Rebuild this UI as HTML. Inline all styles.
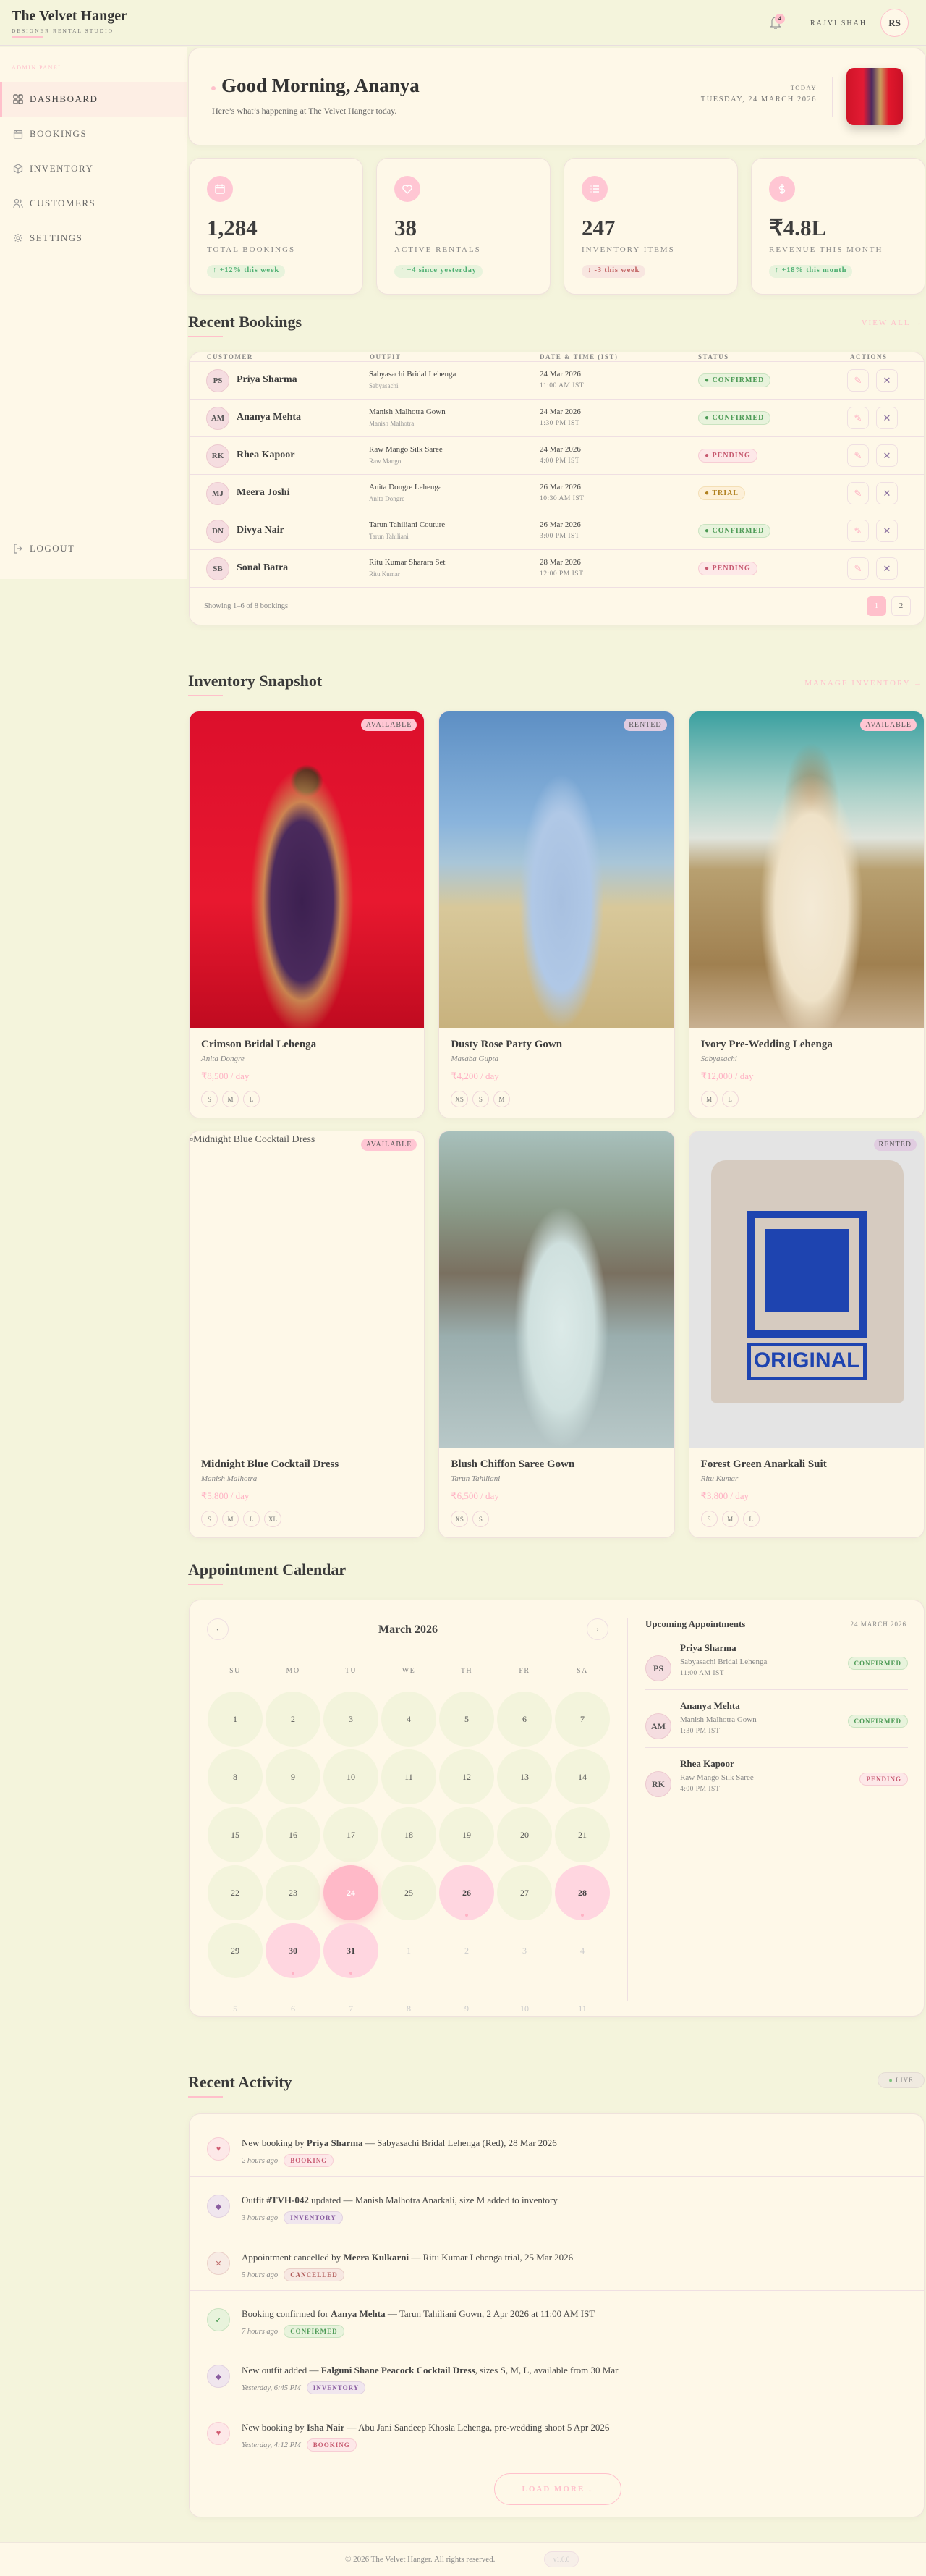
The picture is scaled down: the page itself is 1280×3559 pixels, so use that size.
<!DOCTYPE html>
<html><head><meta charset="utf-8">
<style>
*{box-sizing:border-box;margin:0;padding:0}
body{width:1280px;height:3559px;background:#f4f4dc;font-family:"Liberation Serif",serif;color:#3d3d3d;position:relative;overflow:hidden}
.abs{position:absolute}
.card{background:#fef8e8;border:1px solid #efe2dc;border-radius:16px;box-shadow:0 2px 8px rgba(200,180,170,.12)}
.hdr{left:0;top:0;width:1280px;height:64px;border-bottom:2px solid #e9dfe0}
.sec-title{font-size:22px;font-weight:bold;color:#3a3a3a}
.uline{width:48px;height:2px;background:#ffc0cb;margin-top:6px}
.link{font-size:11px;letter-spacing:2px;color:#ffc0cb}
.pill{display:inline-block;border-radius:12px;font-size:10px;font-weight:bold;letter-spacing:1px;padding:3px 8px}
.conf{background:#e8f3dc;color:#4c9a55;border:1px solid #c9e3c0}
.pend{background:#fde8e8;color:#c75a70;border:1px solid #f7cdd4}
.trial{background:#fdf0d8;color:#b08020;border:1px solid #f4dfb5}
.inv{background:#f0e6ee;color:#8a5ea0;border:1px solid #e2d2e0}
.canc{background:#f7e8e2;color:#b05a5a;border:1px solid #ead0c8}
.av{width:32px;height:32px;border-radius:50%;background:#f5dde0;border:1px solid #ecc9cf;display:flex;align-items:center;justify-content:center;font-size:11px;font-weight:bold;color:#555}
.nav{position:absolute;left:0;width:259px;height:48px;display:flex;align-items:center;padding-left:18px;font-size:13px;letter-spacing:1.5px;color:#6a6a6a}
.nav svg{margin-right:9px}
.stat{position:absolute;top:218px;width:241px;height:189px}
.stat .ic{position:absolute;left:24px;top:24px;width:36px;height:36px;border-radius:50%;background:#ffc6d3;display:flex;align-items:center;justify-content:center}
.stat .num{position:absolute;left:24px;top:78px;font-size:31px;font-weight:bold;color:#3d3d3d}
.stat .lbl{position:absolute;left:24px;top:120px;font-size:11px;letter-spacing:2px;color:#888}
.stat .bd{position:absolute;left:24px;top:147px;height:18px;border-radius:9px;font-size:10.5px;font-weight:bold;letter-spacing:.8px;padding:2px 8px}
.row{position:absolute;left:0;width:1017px;height:52px;border-top:1px solid #efdfe2}
.row .av{position:absolute;left:23px;top:10px}
.row .nm{position:absolute;left:65px;top:17px;font-size:14px;font-weight:bold}
.row .o1{position:absolute;left:248px;top:11px;font-size:11px;color:#444}
.row .o2{position:absolute;left:248px;top:28px;font-size:9px;color:#999}
.row .d1{position:absolute;left:484px;top:11px;font-size:11px;color:#444}
.row .d2{position:absolute;left:484px;top:28px;font-size:9.5px;color:#888;letter-spacing:.5px}
.row .st{position:absolute;left:703px;top:16px}
.row .b{position:absolute;top:10px;width:30px;height:31px;border:1px solid #efdfe2;border-radius:8px;display:flex;align-items:center;justify-content:center;font-size:13px}
.th{position:absolute;top:1px;font-size:9px;letter-spacing:1.5px;color:#888;font-weight:bold}
.inv-card{position:relative;height:563px;overflow:hidden;border-radius:14px}
.inv-card .img{position:absolute;left:0;top:0;width:100%;height:437px}
.inv-card .tag{position:absolute;right:10px;top:10px;border-radius:10px;font-size:10px;letter-spacing:1px;padding:3px 7px;color:#555}
.inv-card .t{position:absolute;left:16px;top:452px;font-size:15px;font-weight:bold}
.inv-card .dz{position:absolute;left:16px;top:474px;font-size:11px;font-style:italic;color:#888}
.inv-card .pr{position:absolute;left:16px;top:496px;font-size:13px;color:#ffb2c4}
.inv-card .sz{position:absolute;left:16px;top:524px;display:flex;gap:6px}
.sz span{height:23px;min-width:23px;padding:0 5px;border:1px solid #efd6da;border-radius:12px;font-size:9px;color:#777;display:flex;align-items:center;justify-content:center}
.cal{position:absolute;left:25px;top:126px;display:grid;grid-template-columns:repeat(7,76px);column-gap:4px;row-gap:4px}
.cal div{width:76px;height:76px;border-radius:50%;background:#f3f4dc;display:flex;align-items:center;justify-content:center;font-size:12px;color:#555;position:relative}
.cal .o{background:transparent;color:#ccc}
.cal .h{background:#ffd6e0;font-weight:bold;color:#444}
.cal .h:after{content:"";position:absolute;bottom:5px;left:36px;width:4px;height:4px;border-radius:50%;background:#ffb2c4}
.cal .t{background:#ffb9c8;color:#fff;font-weight:bold;box-shadow:0 4px 12px rgba(255,170,190,.5)}
.dn{position:absolute;top:92px;width:76px;text-align:center;font-size:10px;letter-spacing:1.5px;color:#888}
.ap{position:absolute;left:0;width:363px;height:78px}
.ap .av{position:absolute;left:0;top:18px;width:36px;height:36px;font-size:12px}
.ap .n{position:absolute;left:48px;top:0;font-size:13px;font-weight:bold}
.ap .s{position:absolute;left:48px;top:21px;font-size:11px;color:#888}
.ap .tm{position:absolute;left:48px;top:38px;font-size:9.5px;color:#888;letter-spacing:.5px}
.ap .pill{position:absolute;right:0;top:20px;font-size:9px}
.act{position:absolute;left:0;width:1017px;height:78px;border-top:1px solid #efdfe2}
.act .ic{position:absolute;left:24px;top:24px;width:32px;height:32px;border-radius:50%;display:flex;align-items:center;justify-content:center;font-size:11px}
.act .tx{position:absolute;left:72px;top:24px;font-size:13px;color:#444}
.act .mt{position:absolute;left:72px;top:47px;display:flex;align-items:center;gap:8px;font-size:10.5px;font-style:italic;color:#888}
.act .mt .pill{font-style:normal;font-size:9px;padding:3px 8px}
</style></head><body>

<!-- HEADER -->
<div class="abs hdr">
  <div class="abs" style="left:16px;top:11px;font-size:20px;font-weight:bold;color:#333">The Velvet Hanger</div>
  <div class="abs" style="left:16px;top:38px;font-size:7.5px;letter-spacing:2px;color:#777">DESIGNER RENTAL STUDIO</div>
  <div class="abs" style="left:16px;top:50px;width:44px;height:2px;background:#ffc0cb"></div>
  <svg class="abs" style="left:1063px;top:20px" width="18" height="22" viewBox="0 0 18 22"><path d="M4 16V9a5 5 0 0 1 10 0v7l2 1H2z" fill="none" stroke="#999" stroke-width="1.2"/><path d="M7 19h4" stroke="#999" stroke-width="1.5"/></svg>
  <div class="abs" style="left:1071px;top:19px;width:14px;height:14px;border-radius:50%;background:#ffc0cb;font-size:8px;font-weight:bold;text-align:center;line-height:14px;color:#333">4</div>
  <div class="abs" style="left:1120px;top:27px;font-size:10px;letter-spacing:2px;color:#555">RAJVI SHAH</div>
  <div class="abs" style="left:1217px;top:12px;width:39px;height:39px;border-radius:50%;border:1px solid #ffc0cb;background:#fef8e8;text-align:center;line-height:37px;font-size:13px;font-weight:bold;color:#444">RS</div>
</div>

<!-- SIDEBAR -->
<div class="abs" style="left:0;top:65px;width:259px;height:735px;background:#fef8e8;border-right:1px solid #efe6dc">
  <div class="abs" style="left:16px;top:24px;font-size:8px;letter-spacing:1.5px;color:#ffc0cb">ADMIN PANEL</div>
  <div class="nav" style="top:48px;background:#fdeee4;border-left:3px solid #ffc0cb;padding-left:15px;color:#444"><svg width="14" height="14" viewBox="0 0 14 14" fill="none" stroke="#555" stroke-width="1.2"><rect x="1" y="1" width="5" height="5" rx="1"/><rect x="8" y="1" width="5" height="5" rx="1"/><rect x="1" y="8" width="5" height="5" rx="1"/><rect x="8" y="8" width="5" height="5" rx="1"/></svg>DASHBOARD</div>
  <div class="nav" style="top:96px"><svg width="14" height="14" viewBox="0 0 14 14" fill="none" stroke="#999" stroke-width="1.2"><rect x="1.5" y="2.5" width="11" height="10.5" rx="1.5"/><path d="M1.5 6h11M4.5 1v3M9.5 1v3"/></svg>BOOKINGS</div>
  <div class="nav" style="top:144px"><svg width="14" height="14" viewBox="0 0 14 14" fill="none" stroke="#999" stroke-width="1.2"><path d="M7 1l5.5 3v6L7 13 1.5 10V4zM1.5 4L7 7l5.5-3M7 7v6"/></svg>INVENTORY</div>
  <div class="nav" style="top:192px"><svg width="14" height="14" viewBox="0 0 14 14" fill="none" stroke="#999" stroke-width="1.2"><circle cx="5" cy="4" r="2.5"/><path d="M1 13c0-3 2-5 4-5s4 2 4 5M9.5 1.8a2.5 2.5 0 0 1 0 4.5M11 8.5c1.3.7 2 2.4 2 4.5"/></svg>CUSTOMERS</div>
  <div class="nav" style="top:240px"><svg width="14" height="14" viewBox="0 0 14 14" fill="none" stroke="#999" stroke-width="1.2"><circle cx="7" cy="7" r="2"/><path d="M7 1v2M7 11v2M1 7h2M11 7h2M2.8 2.8l1.4 1.4M9.8 9.8l1.4 1.4M2.8 11.2l1.4-1.4M9.8 4.2l1.4-1.4"/></svg>SETTINGS</div>
  <div class="abs" style="left:0;top:660px;width:259px;border-top:1px solid #efe2dc"></div>
  <div class="nav" style="top:669px;height:48px"><svg width="14" height="14" viewBox="0 0 14 14" fill="none" stroke="#999" stroke-width="1.2"><path d="M5 1H2v12h3M9 4l3 3-3 3M12 7H5"/></svg>LOGOUT</div>
</div>

<!-- GREETING -->
<div class="abs card" style="left:260px;top:66px;width:1020px;height:135px">
  <div class="abs" style="left:31px;top:52px;width:6px;height:6px;border-radius:50%;background:#ffc0cb"></div>
  <div class="abs" style="left:45px;top:36px;font-size:27px;font-weight:bold;color:#333">Good Morning, Ananya</div>
  <div class="abs" style="left:32px;top:79px;font-size:12px;color:#666">Here’s what’s happening at The Velvet Hanger today.</div>
  <div class="abs" style="right:150px;top:49px;font-size:8.5px;letter-spacing:1.5px;color:#777">TODAY</div>
  <div class="abs" style="right:150px;top:65px;font-size:10.5px;letter-spacing:1.5px;color:#777">TUESDAY, 24 MARCH 2026</div>
  <div class="abs" style="left:889px;top:40px;width:1px;height:55px;background:#efdfe2"></div>
  <div class="abs" style="left:909px;top:27px;width:78px;height:79px;border-radius:10px;background:linear-gradient(90deg,#d01428 0%,#e31b34 30%,#4a2a60 45%,#c8a060 60%,#e0182c 75%,#c91026 100%);box-shadow:0 6px 14px rgba(0,0,0,.2)"></div>
</div>

<!-- STATS -->
<div class="stat card" style="left:261px"><div class="ic"><svg width="16" height="16" viewBox="0 0 16 16" fill="none" stroke="#fff" stroke-width="1.4"><rect x="2" y="3" width="12" height="11" rx="1.5"/><path d="M2 6.5h12M5 1.5v3M11 1.5v3"/></svg></div><div class="num">1,284</div><div class="lbl">TOTAL BOOKINGS</div><div class="bd" style="background:#e8f3dc;color:#4cae70">↑ +12% this week</div></div>
<div class="stat card" style="left:520px"><div class="ic"><svg width="16" height="16" viewBox="0 0 16 16" fill="none" stroke="#fff" stroke-width="1.4"><path d="M8 14L2.5 8.5a3.2 3.2 0 0 1 5.5-4 3.2 3.2 0 0 1 5.5 4z"/></svg></div><div class="num">38</div><div class="lbl">ACTIVE RENTALS</div><div class="bd" style="background:#e8f3dc;color:#4cae70">↑ +4 since yesterday</div></div>
<div class="stat card" style="left:779px"><div class="ic"><svg width="16" height="16" viewBox="0 0 16 16" fill="none" stroke="#fff" stroke-width="1.4"><path d="M6 4h8M6 8h8M6 12h8M2.5 4h1M2.5 8h1M2.5 12h1"/></svg></div><div class="num">247</div><div class="lbl">INVENTORY ITEMS</div><div class="bd" style="background:#f8e6e0;color:#c06060">↓ -3 this week</div></div>
<div class="stat card" style="left:1038px;width:241px"><div class="ic"><svg width="16" height="16" viewBox="0 0 16 16" fill="none" stroke="#fff" stroke-width="1.4"><path d="M8 1v14M11 4.5H6.5a2 2 0 0 0 0 4h3a2 2 0 0 1 0 4H5"/></svg></div><div class="num">₹4.8L</div><div class="lbl">REVENUE THIS MONTH</div><div class="bd" style="background:#e8f3dc;color:#4cae70">↑ +18% this month</div></div>

<!-- RECENT BOOKINGS -->
<div class="abs" style="left:260px;top:432px"><div class="sec-title">Recent Bookings</div><div class="uline"></div></div>
<div class="abs link" style="right:4px;top:440px">VIEW ALL →</div>
<div class="abs card" style="left:261px;top:486px;width:1017px;height:378px;overflow:hidden">
  <div class="th" style="left:24px">CUSTOMER</div><div class="th" style="left:249px">OUTFIT</div><div class="th" style="left:484px">DATE &amp; TIME (IST)</div><div class="th" style="left:703px">STATUS</div><div class="th" style="left:913px">ACTIONS</div>
  <div class="row" style="top:12px"><div class="av">PS</div><div class="nm">Priya Sharma</div><div class="o1">Sabyasachi Bridal Lehenga</div><div class="o2">Sabyasachi</div><div class="d1">24 Mar 2026</div><div class="d2">11:00 AM IST</div><div class="st pill conf">● CONFIRMED</div><div class="b" style="left:909px;color:#ffb2c4">✎</div><div class="b" style="left:949px;color:#8a70a0">✕</div></div>
  <div class="row" style="top:64px"><div class="av">AM</div><div class="nm">Ananya Mehta</div><div class="o1">Manish Malhotra Gown</div><div class="o2">Manish Malhotra</div><div class="d1">24 Mar 2026</div><div class="d2">1:30 PM IST</div><div class="st pill conf">● CONFIRMED</div><div class="b" style="left:909px;color:#ffb2c4">✎</div><div class="b" style="left:949px;color:#8a70a0">✕</div></div>
  <div class="row" style="top:116px"><div class="av">RK</div><div class="nm">Rhea Kapoor</div><div class="o1">Raw Mango Silk Saree</div><div class="o2">Raw Mango</div><div class="d1">24 Mar 2026</div><div class="d2">4:00 PM IST</div><div class="st pill pend">● PENDING</div><div class="b" style="left:909px;color:#ffb2c4">✎</div><div class="b" style="left:949px;color:#8a70a0">✕</div></div>
  <div class="row" style="top:168px"><div class="av">MJ</div><div class="nm">Meera Joshi</div><div class="o1">Anita Dongre Lehenga</div><div class="o2">Anita Dongre</div><div class="d1">26 Mar 2026</div><div class="d2">10:30 AM IST</div><div class="st pill trial">● TRIAL</div><div class="b" style="left:909px;color:#ffb2c4">✎</div><div class="b" style="left:949px;color:#8a70a0">✕</div></div>
  <div class="row" style="top:220px"><div class="av">DN</div><div class="nm">Divya Nair</div><div class="o1">Tarun Tahiliani Couture</div><div class="o2">Tarun Tahiliani</div><div class="d1">26 Mar 2026</div><div class="d2">3:00 PM IST</div><div class="st pill conf">● CONFIRMED</div><div class="b" style="left:909px;color:#ffb2c4">✎</div><div class="b" style="left:949px;color:#8a70a0">✕</div></div>
  <div class="row" style="top:272px"><div class="av">SB</div><div class="nm">Sonal Batra</div><div class="o1">Ritu Kumar Sharara Set</div><div class="o2">Ritu Kumar</div><div class="d1">28 Mar 2026</div><div class="d2">12:00 PM IST</div><div class="st pill pend">● PENDING</div><div class="b" style="left:909px;color:#ffb2c4">✎</div><div class="b" style="left:949px;color:#8a70a0">✕</div></div>
  <div class="row" style="top:324px;height:54px"><div class="abs" style="left:20px;top:20px;font-size:10.5px;color:#888">Showing 1–6 of 8 bookings</div>
    <div class="abs" style="left:936px;top:12px;width:27px;height:27px;border-radius:6px;background:#ffc0cb;color:#fff;font-size:11px;text-align:center;line-height:27px">1</div>
    <div class="abs" style="left:970px;top:12px;width:27px;height:27px;border-radius:6px;border:1px solid #efdfe2;color:#666;font-size:11px;text-align:center;line-height:25px">2</div></div>
</div>

<!-- INVENTORY -->
<div class="abs" style="left:260px;top:928px"><div class="sec-title">Inventory Snapshot</div><div class="uline"></div></div>
<div class="abs link" style="right:4px;top:938px">MANAGE INVENTORY →</div>
<div class="abs" style="left:261px;top:982px;width:1017px;display:grid;grid-template-columns:repeat(3,1fr);column-gap:19px;row-gap:17px">
  <div class="inv-card card"><div class="img" style="background:radial-gradient(ellipse 22% 42% at 48% 60%,#3c2050 0%,#4a2a5c 60%,rgba(200,160,90,.8) 75%,rgba(220,20,45,0) 100%),radial-gradient(circle at 50% 22%,#5a3020 0 4%,transparent 6%),linear-gradient(#dc0f2c,#e8182f 60%,#c00b20)"></div><div class="tag" style="background:#ffc6d3">AVAILABLE</div><div class="t">Crimson Bridal Lehenga</div><div class="dz">Anita Dongre</div><div class="pr">₹8,500 / day</div><div class="sz"><span>S</span><span>M</span><span>L</span></div></div>
  <div class="inv-card card"><div class="img" style="background:radial-gradient(ellipse 18% 40% at 52% 60%,#a8c0e0 0%,#b0c8e6 70%,rgba(176,200,230,0) 100%),linear-gradient(#5d8fc4 0%,#8ab4dc 35%,#a9c6d8 48%,#d8c89a 62%,#c8b27e 100%)"></div><div class="tag" style="background:#e0cce0">RENTED</div><div class="t">Dusty Rose Party Gown</div><div class="dz">Masaba Gupta</div><div class="pr">₹4,200 / day</div><div class="sz"><span>XS</span><span>S</span><span>M</span></div></div>
  <div class="inv-card card"><div class="img" style="background:radial-gradient(ellipse 22% 42% at 52% 62%,#f4ead6 0%,#efe2c8 70%,rgba(240,230,210,0) 100%),radial-gradient(ellipse 12% 20% at 52% 30%,#a07848 0%,rgba(160,120,72,0) 100%),linear-gradient(#3aa0a0 0%,#a8d0c8 25%,#e0e4dc 40%,#b8a070 50%,#a08050 80%,#c8b090 100%)"></div><div class="tag" style="background:#ffc6d3">AVAILABLE</div><div class="t">Ivory Pre-Wedding Lehenga</div><div class="dz">Sabyasachi</div><div class="pr">₹12,000 / day</div><div class="sz"><span>M</span><span>L</span></div></div>
  <div class="inv-card card"><div class="abs" style="left:0;top:4px;font-size:14px;color:#555">▫Midnight Blue Cocktail Dress</div><div class="tag" style="background:#ffc6d3">AVAILABLE</div><div class="t">Midnight Blue Cocktail Dress</div><div class="dz">Manish Malhotra</div><div class="pr">₹5,800 / day</div><div class="sz"><span>S</span><span>M</span><span>L</span><span>XL</span></div></div>
  <div class="inv-card card"><div class="img" style="background:radial-gradient(ellipse 20% 38% at 52% 62%,#dceae8 0%,#cfe0de 70%,rgba(200,220,218,0) 100%),linear-gradient(#a8c0bc 0%,#8a9a88 25%,#7a7060 45%,#9aaeae 65%,#b8c8c8 100%)"></div><div class="t">Blush Chiffon Saree Gown</div><div class="dz">Tarun Tahiliani</div><div class="pr">₹6,500 / day</div><div class="sz"><span>XS</span><span>S</span></div></div>
  <div class="inv-card card"><div class="img" style="background:#e4e4e4"><div class="abs" style="left:30px;top:40px;width:266px;height:335px;background:#d6cbc0;border-radius:20px 20px 6px 6px"></div><div class="abs" style="left:80px;top:110px;width:165px;height:175px;border:10px solid #1e44b0;background:#d6cbc0"></div><div class="abs" style="left:105px;top:135px;width:115px;height:115px;background:#1e44b0"></div><div class="abs" style="left:80px;top:292px;width:165px;height:52px;border:5px solid #1e44b0;color:#1e44b0;font-family:'Liberation Sans',sans-serif;font-weight:bold;font-size:30px;line-height:40px;text-align:center">ORIGINAL</div></div><div class="tag" style="background:#e0cce0">RENTED</div><div class="t">Forest Green Anarkali Suit</div><div class="dz">Ritu Kumar</div><div class="pr">₹3,800 / day</div><div class="sz"><span>S</span><span>M</span><span>L</span></div></div>
</div>

<!-- CALENDAR -->
<div class="abs" style="left:260px;top:2156px"><div class="sec-title">Appointment Calendar</div><div class="uline"></div></div>
<div class="abs card" style="left:261px;top:2210px;width:1017px;height:576px">
  <div class="abs" style="left:24px;top:25px;width:30px;height:30px;border-radius:50%;border:1px solid #efdfe2;text-align:center;line-height:28px;font-size:11px;color:#888">‹</div>
  <div class="abs" style="left:549px;top:25px;width:30px;height:30px;border-radius:50%;border:1px solid #efdfe2;text-align:center;line-height:28px;font-size:11px;color:#888">›</div>
  <div class="abs" style="left:0;width:604px;top:32px;text-align:center;font-size:16px;font-weight:bold;color:#444">March 2026</div>
  <div class="dn" style="left:25px">SU</div><div class="dn" style="left:105px">MO</div><div class="dn" style="left:185px">TU</div><div class="dn" style="left:265px">WE</div><div class="dn" style="left:345px">TH</div><div class="dn" style="left:425px">FR</div><div class="dn" style="left:505px">SA</div>
  <div class="cal">
    <div>1</div><div>2</div><div>3</div><div>4</div><div>5</div><div>6</div><div>7</div>
    <div>8</div><div>9</div><div>10</div><div>11</div><div>12</div><div>13</div><div>14</div>
    <div>15</div><div>16</div><div>17</div><div>18</div><div>19</div><div>20</div><div>21</div>
    <div>22</div><div>23</div><div class="t">24</div><div>25</div><div class="h">26</div><div>27</div><div class="h">28</div>
    <div>29</div><div class="h">30</div><div class="h">31</div><div class="o">1</div><div class="o">2</div><div class="o">3</div><div class="o">4</div>
    <div class="o">5</div><div class="o">6</div><div class="o">7</div><div class="o">8</div><div class="o">9</div><div class="o">10</div><div class="o">11</div>
  </div>
  <div class="abs" style="left:605px;top:24px;width:1px;height:530px;background:#efdfe2"></div>
  <div class="abs" style="left:630px;top:25px;font-size:13px;font-weight:bold;color:#444">Upcoming Appointments</div>
  <div class="abs" style="right:24px;top:28px;font-size:9px;letter-spacing:1px;color:#888">24 MARCH 2026</div>
  <div class="abs" style="left:630px;top:58px;width:363px;height:300px">
    <div class="ap" style="top:0"><div class="av">PS</div><div class="n">Priya Sharma</div><div class="s">Sabyasachi Bridal Lehenga</div><div class="tm">11:00 AM IST</div><div class="pill conf">CONFIRMED</div></div>
    <div class="abs" style="left:0;top:65px;width:363px;height:1px;background:#efdfe2"></div>
    <div class="ap" style="top:80px"><div class="av">AM</div><div class="n">Ananya Mehta</div><div class="s">Manish Malhotra Gown</div><div class="tm">1:30 PM IST</div><div class="pill conf">CONFIRMED</div></div>
    <div class="abs" style="left:0;top:145px;width:363px;height:1px;background:#efdfe2"></div>
    <div class="ap" style="top:160px"><div class="av">RK</div><div class="n">Rhea Kapoor</div><div class="s">Raw Mango Silk Saree</div><div class="tm">4:00 PM IST</div><div class="pill pend">PENDING</div></div>
  </div>
</div>

<!-- ACTIVITY -->
<div class="abs" style="left:260px;top:2864px"><div class="sec-title">Recent Activity</div><div class="uline"></div></div>
<div class="abs" style="left:1213px;top:2863px;width:65px;height:22px;border-radius:11px;background:#f0eae0;border:1px solid #e4dcd4;font-size:9px;letter-spacing:1px;color:#888;text-align:center;line-height:20px"><span style="color:#7cc47c">●</span> LIVE</div>
<div class="abs card" style="left:261px;top:2920px;width:1017px;height:558px;overflow:hidden">
  <div class="act" style="top:8px;border-top:none"><div class="ic" style="background:#fde8e8;border:1px solid #f7cdd4;color:#d05a70">♥</div><div class="tx">New booking by <b>Priya Sharma</b> — Sabyasachi Bridal Lehenga (Red), 28 Mar 2026</div><div class="mt">2 hours ago <span class="pill pend">BOOKING</span></div></div>
  <div class="act" style="top:86px"><div class="ic" style="background:#f0e6ee;border:1px solid #e2d2e0;color:#8a5ea0">◆</div><div class="tx">Outfit <b>#TVH-042</b> updated — Manish Malhotra Anarkali, size M added to inventory</div><div class="mt">3 hours ago <span class="pill inv">INVENTORY</span></div></div>
  <div class="act" style="top:165px"><div class="ic" style="background:#f7ebe4;border:1px solid #ead0c8;color:#c07070">✕</div><div class="tx">Appointment cancelled by <b>Meera Kulkarni</b> — Ritu Kumar Lehenga trial, 25 Mar 2026</div><div class="mt">5 hours ago <span class="pill canc">CANCELLED</span></div></div>
  <div class="act" style="top:243px"><div class="ic" style="background:#e8f3dc;border:1px solid #c9e3c0;color:#4c9a55">✓</div><div class="tx">Booking confirmed for <b>Aanya Mehta</b> — Tarun Tahiliani Gown, 2 Apr 2026 at 11:00 AM IST</div><div class="mt">7 hours ago <span class="pill conf">CONFIRMED</span></div></div>
  <div class="act" style="top:321px"><div class="ic" style="background:#f0e6ee;border:1px solid #e2d2e0;color:#8a5ea0">◆</div><div class="tx">New outfit added — <b>Falguni Shane Peacock Cocktail Dress</b>, sizes S, M, L, available from 30 Mar</div><div class="mt">Yesterday, 6:45 PM <span class="pill inv">INVENTORY</span></div></div>
  <div class="act" style="top:400px"><div class="ic" style="background:#fde8e8;border:1px solid #f7cdd4;color:#d05a70">♥</div><div class="tx">New booking by <b>Isha Nair</b> — Abu Jani Sandeep Khosla Lehenga, pre-wedding shoot 5 Apr 2026</div><div class="mt">Yesterday, 4:12 PM <span class="pill pend">BOOKING</span></div></div>
  <div class="abs" style="left:421px;top:496px;width:176px;height:44px;border:1px solid #ffc0cb;border-radius:22px;text-align:center;line-height:42px;font-size:11px;letter-spacing:2px;font-weight:bold;color:#ffc0cb">LOAD MORE ↓</div>
</div>

<!-- FOOTER -->
<div class="abs" style="left:0;top:3512px;width:1280px;height:47px;background:#fef8e8;border-top:1px solid #efe6dc">
  <div class="abs" style="left:477px;top:17px;font-size:11px;color:#888">© 2026 The Velvet Hanger. All rights reserved.</div>
  <div class="abs" style="left:739px;top:16px;width:1px;height:15px;background:#efdfe2"></div>
  <div class="abs" style="left:752px;top:12px;width:48px;height:22px;border-radius:11px;border:1px solid #efdfe2;background:#f7efe8;font-size:9px;color:#ccc;text-align:center;line-height:20px">v1.0.0</div>
</div>
</body></html>
